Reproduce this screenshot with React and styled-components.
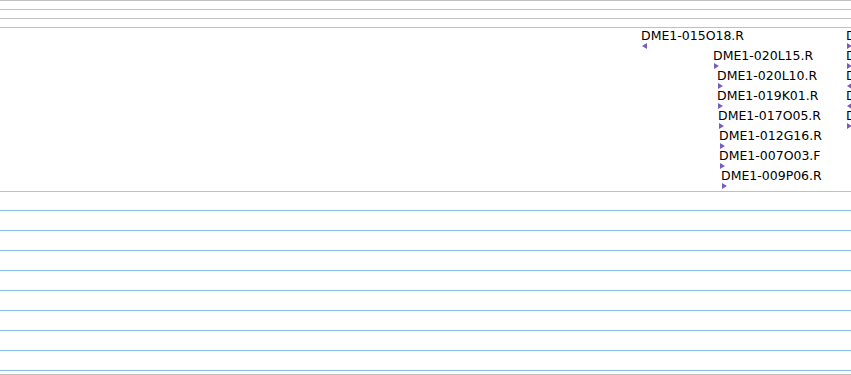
import styled, { createGlobalStyle } from "styled-components";

const GlobalStyle = createGlobalStyle`
  *, *::before, *::after {
    box-sizing: border-box;
  }
  html, body {
    margin: 0;
    padding: 0;
    background: #ffffff;
    overflow: hidden;
  }
`;

const features = [
  { name: "DME1-015O18.R", x: 641, row: 0, dir: "left" },
  { name: "DME1-020L15.R", x: 713, row: 1, dir: "right" },
  { name: "DME1-020L10.R", x: 717, row: 2, dir: "right" },
  { name: "DME1-019K01.R", x: 717, row: 3, dir: "right" },
  { name: "DME1-017O05.R", x: 718, row: 4, dir: "right" },
  { name: "DME1-012G16.R", x: 719, row: 5, dir: "right" },
  { name: "DME1-007O03.F", x: 719, row: 6, dir: "right" },
  { name: "DME1-009P06.R", x: 721, row: 7, dir: "right" },
  { name: "DME1-021A02.R", x: 846, row: 0, dir: "right" },
  { name: "DME1-018B11.R", x: 846, row: 1, dir: "right" },
  { name: "DME1-004C07.R", x: 846, row: 2, dir: "left" },
  { name: "DME1-010D09.R", x: 846, row: 3, dir: "left" },
  { name: "DME1-016E03.R", x: 846, row: 4, dir: "right" },
];

const Browser = styled.div`
  width: 851px;
  height: 375px;
  display: flex;
  flex-direction: column;
  overflow: hidden;
`;

const Band = styled.div`
  height: ${(p) => p.h}px;
  flex: none;
  border-top: 1px solid ${(p) => (p.blue ? "#86bfe8" : "#c0c0c0")};
  position: relative;
`;

const Feature = styled.div`
  position: absolute;
  display: flex;
  flex-direction: column;
  align-items: flex-start;
`;

const Label = styled.span`
  font-family: "DejaVu Sans", sans-serif;
  font-size: 12.5px;
  line-height: 12px;
  color: #000;
  white-space: nowrap;
`;

const Arrow = styled.svg`
  display: block;
  margin-top: 1px;
  margin-left: 1px;
  fill: #7a5cbf;
`;

const Strand = ({ dir }) => (
  <Arrow width="5" height="6" viewBox="0 0 5 6">
    {dir === "left" ? (
      <polygon points="5,0 0,3 5,6" />
    ) : (
      <polygon points="0,0 5,3 0,6" />
    )}
  </Arrow>
);

export default function App() {
  return (
    <Browser>
      <GlobalStyle />
      <Band h={9} />
      <Band h={9} />
      <Band h={9} />
      <Band h={164}>
        {features.map((f) => (
          <Feature key={f.name} style={{ left: f.x, top: 2 + f.row * 20 }}>
            <Label>{f.name}</Label>
            <Strand dir={f.dir} />
          </Feature>
        ))}
      </Band>
      <Band h={19} />
      {[0, 1, 2, 3, 4, 5, 6, 7].map((i) => (
        <Band key={i} h={20} blue />
      ))}
      <Band h={4} blue />
      <Band h={1} />
    </Browser>
  );
}
